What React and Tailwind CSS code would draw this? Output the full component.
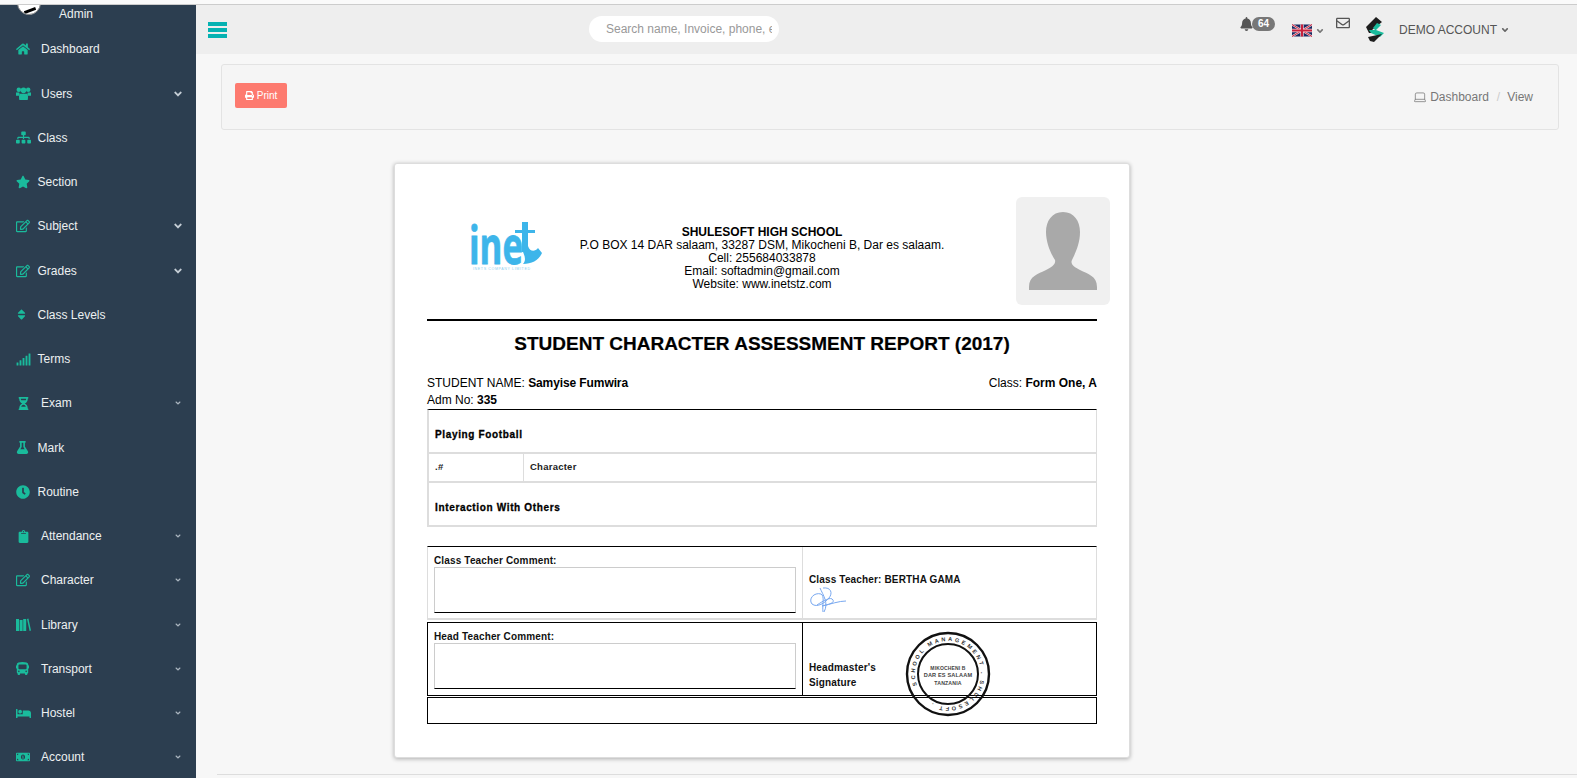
import React from "react";
import { FaHome, FaSitemap, FaStar, FaRegEdit, FaSort, FaSignal, FaHourglassHalf, FaFlask, FaClock, FaClipboard, FaBus, FaBed, FaMoneyBillAlt, FaAngleDown, FaBell, FaRegEnvelope, FaPrint } from "react-icons/fa";
import { Laptop } from "lucide-react";

const Books = (p) => (
  <svg viewBox="0 0 15 13" width="15" height="13" fill="#1abb9c" {...p}>
    <rect x="0" y="1" width="3" height="12" />
    <rect x="3.6" y="2" width="3" height="11" />
    <rect x="7.2" y="1" width="3" height="12" />
    <path d="M11 1 L12.4 0.6 L15 12.6 L13.6 13 Z" />
  </svg>
);

const UsersIcon = (p) => (
  <svg viewBox="0 0 16 14" fill="#1abb9c" {...p}>
    <circle cx="3" cy="3" r="2.4" />
    <circle cx="13" cy="3" r="2.4" />
    <circle cx="8" cy="3.6" r="3" />
    <path d="M0 6 H3.4 C4 7.5 4 8 3.4 9.5 H0 Z" />
    <path d="M16 6 H12.6 C12 7.5 12 8 12.6 9.5 H16 Z" />
    <path d="M4.2 7.2 H11.8 C13 8 13 12 12.4 14 H3.6 C3 12 3 8 4.2 7.2 Z" />
  </svg>
);

const items = [
  { label: "Dashboard", Icon: FaHome, size: 14, tx: 41 },
  { label: "Users", Icon: UsersIcon, size: 15, tx: 41, arrow: "big" },
  { label: "Class", Icon: FaSitemap, size: 15, tx: 37.5 },
  { label: "Section", Icon: FaStar, size: 14, tx: 37.5 },
  { label: "Subject", Icon: FaRegEdit, size: 14, tx: 37.5, arrow: "big" },
  { label: "Grades", Icon: FaRegEdit, size: 14, tx: 37.5, arrow: "big" },
  { label: "Class Levels", Icon: FaSort, size: 13, tx: 37.5, ml: -1 },
  { label: "Terms", Icon: FaSignal, size: 15, tx: 37.5 },
  { label: "Exam", Icon: FaHourglassHalf, size: 13, tx: 41, arrow: "small", ml: 1 },
  { label: "Mark", Icon: FaFlask, size: 13, tx: 37.5 },
  { label: "Routine", Icon: FaClock, size: 14, tx: 37.5 },
  { label: "Attendance", Icon: FaClipboard, size: 13, tx: 41, arrow: "small", ml: 1 },
  { label: "Character", Icon: FaRegEdit, size: 14, tx: 41, arrow: "small" },
  { label: "Library", Icon: Books, size: 15, tx: 41, arrow: "small" },
  { label: "Transport", Icon: FaBus, size: 13, tx: 41, arrow: "small" },
  { label: "Hostel", Icon: FaBed, size: 15, tx: 41, arrow: "small" },
  { label: "Account", Icon: FaMoneyBillAlt, size: 14, tx: 41, arrow: "small" },
];

function Sidebar() {
  return (
    <aside className="w-[196px] shrink-0 bg-[#2c3e50] text-[#ecf0f1] text-[12px] overflow-hidden">
      <div className="h-[22.3px] relative">
        <div className="absolute left-[17px] -top-[14px] w-[24px] h-[24px] rounded-full bg-white border border-[#888] overflow-hidden">
          <div className="absolute left-[6px] top-[17px] w-[12px] h-[3px] bg-black rotate-[-20deg]" />
        </div>
        <span className="absolute left-[59px] top-[1px] leading-[16px]">Admin</span>
      </div>
      {items.map(({ label, Icon, size, tx, arrow, ml }) => (
        <div key={label} className="h-[44.25px] flex items-center relative">
          <span className="w-[16px] shrink-0" />
          <span className="w-[0px] flex items-center" style={{ marginLeft: ml || 0 }}>
            <Icon className="shrink-0 text-[#1abb9c]" style={{ width: size, height: size, minWidth: size }} />
          </span>
          <span style={{ marginLeft: tx - 16 - (ml || 0) }} className="leading-[16px]">{label}</span>
          {arrow === "big" && <FaAngleDown className="absolute left-[172px] top-[16px] text-[#c5ced6]" style={{ width: 12, height: 12 }} />}
          {arrow === "small" && <FaAngleDown className="absolute left-[174px] top-[18px] text-[#aab5bf]" style={{ width: 8, height: 8 }} />}
        </div>
      ))}
    </aside>
  );
}

const Flag = () => (
  <svg viewBox="0 0 60 36" width="20" height="13" className="block">
    <rect width="60" height="36" fill="#1a2a63" />
    <path d="M0 0 L60 36 M60 0 L0 36" stroke="#f3d8dc" strokeWidth="6" />
    <path d="M0 0 L60 36 M60 0 L0 36" stroke="#c8203c" strokeWidth="3" />
    <path d="M30 0 V36 M0 18 H60" stroke="#f3d8dc" strokeWidth="10" />
    <path d="M30 0 V36 M0 18 H60" stroke="#c8203c" strokeWidth="6" />
  </svg>
);

const BrandLogo = () => (
  <svg viewBox="0 0 20 25" width="20" height="25" className="block">
    <path d="M11 0 L17 5 L12 9 L7 13 L11 16 L4 16 L1 10 Z" fill="#1d1d1d" />
    <path d="M12 6 L16 8 L11 13 L19 16 L15 20 L6 16 L4 13 L10 13 L8 11 Z" fill="#1abb9c" />
    <path d="M3 20 L17 17 L9 25 L5 24 Z" fill="#1d1d1d" />
  </svg>
);

function Header() {
  return (
    <header className="h-[49px] shrink-0 bg-[#eeeeee] flex items-center text-[12px] text-[#555]">
      <div className="ml-[12px] w-[19px] h-[16px] flex flex-col justify-between">
        <div className="h-[4px] bg-[#05b2b2]" />
        <div className="h-[4px] bg-[#05b2b2]" />
        <div className="h-[4px] bg-[#05b2b2]" />
      </div>
      <div className="ml-[362px] w-[190px] h-[26px] bg-white rounded-full pl-[17px] pr-[7px] flex items-center -mt-[1px]">
        <input placeholder="Search name, Invoice, phone, email" className="w-full text-[12px] outline-none bg-transparent placeholder:text-[#999]" />
      </div>
      <div className="ml-[460px] flex items-center relative -top-[6px]">
        <FaBell className="text-[#555]" style={{ width: 15, height: 14 }} />
        <span className="-ml-[2px] w-[23px] h-[14px] rounded-full bg-[#777] text-white text-[10px] font-bold leading-[14px] text-center">64</span>
      </div>
      <div className="ml-[17px] flex items-center mt-[2px]">
        <Flag />
        <FaAngleDown className="ml-[3px] text-[#777]" style={{ width: 10, height: 10 }} />
      </div>
      <FaRegEnvelope className="ml-[11px] relative -top-[7px] text-[#555]" style={{ width: 14, height: 14 }} />
      <div className="ml-[15px]"><BrandLogo /></div>
      <span className="ml-[14px]">DEMO ACCOUNT</span>
      <FaAngleDown className="ml-[3px] text-[#666]" style={{ width: 10, height: 10 }} />
    </header>
  );
}

const InetLogo = () => (
  <svg viewBox="0 0 72 50" width="72" height="50" className="block overflow-visible">
    <text x="-3" y="42" fontFamily="'Open Sans', sans-serif" fontSize="52" fontWeight="700" fill="#3db5ea" stroke="#3db5ea" strokeWidth="0.8" textLength="54" lengthAdjust="spacingAndGlyphs">ine</text>
    <rect x="50" y="0" width="6" height="30" fill="#3db5ea" />
    <rect x="43" y="8" width="20" height="3" fill="#3db5ea" />
    <path d="M56 24 C58 30 63 30 66 26 L70 31 C67 38 60 42 51 42 C55 38 52 32 50 28 Z" fill="#3db5ea" />
    <text x="1" y="47.5" fontFamily="'Liberation Sans', sans-serif" fontSize="3.6" fill="#8fd0ee" letterSpacing="0.62">INETS COMPANY LIMITED</text>
  </svg>
);

const Silhouette = () => (
  <svg viewBox="0 0 94 108" width="94" height="108" className="block">
    <path d="M47 15 C36 15 30 24 30 35 C30 46 35 57 39 63 C40 67 36 70 30 73 C22 77 13 79 13 90 L13 93 L81 93 L81 90 C81 79 72 77 64 73 C58 70 54 67 56 63 C60 55 64 46 64 35 C64 24 58 15 47 15 Z" fill="#a9a9a9" />
  </svg>
);

const Signature = () => (
  <svg viewBox="0 0 40 27" width="40" height="27" className="block" fill="none" stroke="#78a8f0" strokeWidth="1">
    <path d="M14 1 C22 0 24 6 20 11 C16 16 8 21 3 17 C-1 12 5 5 12 7 C16 9 13 18 14 25" />
    <path d="M11 1 C14 8 20 16 15 25 M8 18 C14 14 22 9 24 13 C26 16 18 18 13 19 C22 17 30 14 37 14" />
  </svg>
);

const Stamp = () => (
  <svg viewBox="0 0 88 88" width="88" height="88" className="absolute left-[101px] top-[7px]">
    <circle cx="44" cy="44" r="41" fill="none" stroke="#111" strokeWidth="2.4" />
    <circle cx="44" cy="44" r="30" fill="none" stroke="#111" strokeWidth="2" />
    <defs>
      <path id="ring" d="M13 55.3 A33 33 0 1 1 75 55.3 A33 33 0 0 1 13 55.3" />
    </defs>
    <text fontFamily="'Liberation Sans', sans-serif" fontSize="5.6" fontWeight="700" fill="#333" letterSpacing="2.5">
      <textPath href="#ring">SCHOOL MANAGEMENT . SHULESOFT .</textPath>
    </text>
    <g fontFamily="'Liberation Sans', sans-serif" fontSize="5.6" fill="#444" textAnchor="middle">
      <text x="44" y="39.5" fontSize="5">MIKOCHENI B</text>
      <text x="44" y="47">DAR ES SALAAM</text>
      <text x="44" y="55" fontSize="5.2">TANZANIA</text>
    </g>
  </svg>
);

function Report() {
  return (
    <div className="ml-[198px] w-[736px] h-[595px] bg-white rounded-[3px] border border-[#ddd] shadow-[0_1px_4px_rgba(0,0,0,0.3)] pt-[33px] pl-[32px] pr-[32px] text-black text-[12px]">
      <div className="flex h-[108px]">
        <div className="w-[150px] pl-[45px] pt-[25px]"><InetLogo /></div>
        <div className="flex-1 pt-[29px] text-center leading-[13px] whitespace-nowrap">
          <div className="font-bold">SHULESOFT HIGH SCHOOL</div>
          <div>P.O BOX 14 DAR salaam, 33287 DSM, Mikocheni B, Dar es salaam.</div>
          <div>Cell: 255684033878</div>
          <div>Email: softadmin@gmail.com</div>
          <div>Website: www.inetstz.com</div>
        </div>
        <div className="w-[150px] flex justify-end">
          <div className="w-[94px] h-[108px] -mr-[13px] bg-[#f0f0f0] rounded-[6px] shrink-0"><Silhouette /></div>
        </div>
      </div>
      <div className="mt-[14px] h-[2px] bg-black" />
      <h1 className="text-center text-[19px] font-bold leading-[24px] mt-[11px] [-webkit-text-stroke:0.2px_black]">STUDENT CHARACTER ASSESSMENT REPORT (2017)</h1>
      <div className="flex justify-between mt-[19px] leading-[17px]">
        <div>STUDENT NAME: <b className="tracking-[-0.1px]">Samyise Fumwira</b></div>
        <div>Class: <b>Form One, A</b></div>
      </div>
      <div className="leading-[16px]">Adm No: <b>335</b></div>

      <div className="mt-[1px] border-t border-black border-l-2 border-r border-l-[#ddd] border-r-[#ddd] text-[10px] font-bold">
        <div className="h-[44px] flex items-center pl-[6px] pt-[6px] border-b-2 border-[#ddd] tracking-[0.65px] [-webkit-text-stroke:0.3px_black]">Playing Football</div>
        <div className="h-[29px] flex items-center border-b-2 border-[#ddd] text-[#222] text-[9.5px] tracking-[0.25px]">
          <div className="w-[95px] h-full flex items-center pl-[6px] border-r border-[#ddd]">.#</div>
          <div className="pl-[6px]">Character</div>
        </div>
        <div className="h-[44px] flex items-center pl-[6px] pt-[6px] border-b-2 border-[#ddd] tracking-[0.65px] [-webkit-text-stroke:0.3px_black]">Interaction With Others</div>
      </div>

      <div className="mt-[19px] text-[10px] font-bold text-[#111] tracking-[0.15px]">
        <div className="flex h-[74px] border-t border-black border-l border-r border-b-2 border-l-[#ddd] border-r-[#ddd] border-b-[#ddd]">
          <div className="w-[375px] border-r border-[#ddd] pl-[6px] pr-[6px] pt-[7px]">
            <div className="leading-[13px]">Class Teacher Comment:</div>
            <div className="h-[46px] border border-[#ccc] border-b-black" />
          </div>
          <div className="flex-1 pl-[6px] pt-[26px]">
            <div className="leading-[14px]">Class Teacher: BERTHA GAMA</div>
            <Signature />
          </div>
        </div>
        <div className="flex h-[74px] mt-[2px] border border-black">
          <div className="w-[375px] border-r border-black pl-[6px] pr-[6px] pt-[7px]">
            <div className="leading-[13px]">Head Teacher Comment:</div>
            <div className="h-[46px] border border-[#ccc] border-b-black" />
          </div>
          <div className="flex-1 pl-[6px] pt-[38px] relative">
            <div className="leading-[14px]">Headmaster's</div>
            <div className="leading-[15px]">Signature</div>
            <Stamp />
          </div>
        </div>
        <div className="h-[27px] mt-[1px] border border-black" />
      </div>
    </div>
  );
}

export default function App() {
  return (
    <div className="w-[1577px] h-[778px] overflow-hidden bg-[#f7f7f7] flex flex-col" style={{ fontFamily: "'Liberation Sans', Arial, sans-serif" }}>
      <div className="h-[5px] shrink-0 bg-[#fafafa] border-b border-[#ccc]" />
      <div className="flex-1 flex min-h-0">
        <Sidebar />
        <main className="flex-1 min-w-0 flex flex-col">
          <Header />
          <div className="flex-1 min-h-0">
            <div className="mt-[10px] ml-[25px] w-[1338px] h-[66px] bg-[#f5f5f5] border border-[#e3e3e3] rounded-[3px] flex items-start justify-between pt-[18px] pl-[13px] pr-[25px]">
              <button className="w-[52px] h-[25px] bg-[#fd7a6f] rounded-[2px] text-white text-[10px] flex items-center justify-center gap-[3px]">
                <FaPrint style={{ width: 9, height: 9 }} />Print
              </button>
              <div className="flex items-center text-[12px] text-[#777] mt-[5px]">
                <Laptop style={{ width: 14, height: 14 }} strokeWidth={1.3} />
                <span className="ml-[3px]">Dashboard</span>
                <span className="ml-[8px] text-[#ccc]">/</span>
                <span className="ml-[7px]">View</span>
              </div>
            </div>
            <div className="mt-[33px]"><Report /></div>
            <div className="mt-[16px] ml-[21px] h-[1px] bg-[#ddd]" />
          </div>
        </main>
      </div>
    </div>
  );
}
